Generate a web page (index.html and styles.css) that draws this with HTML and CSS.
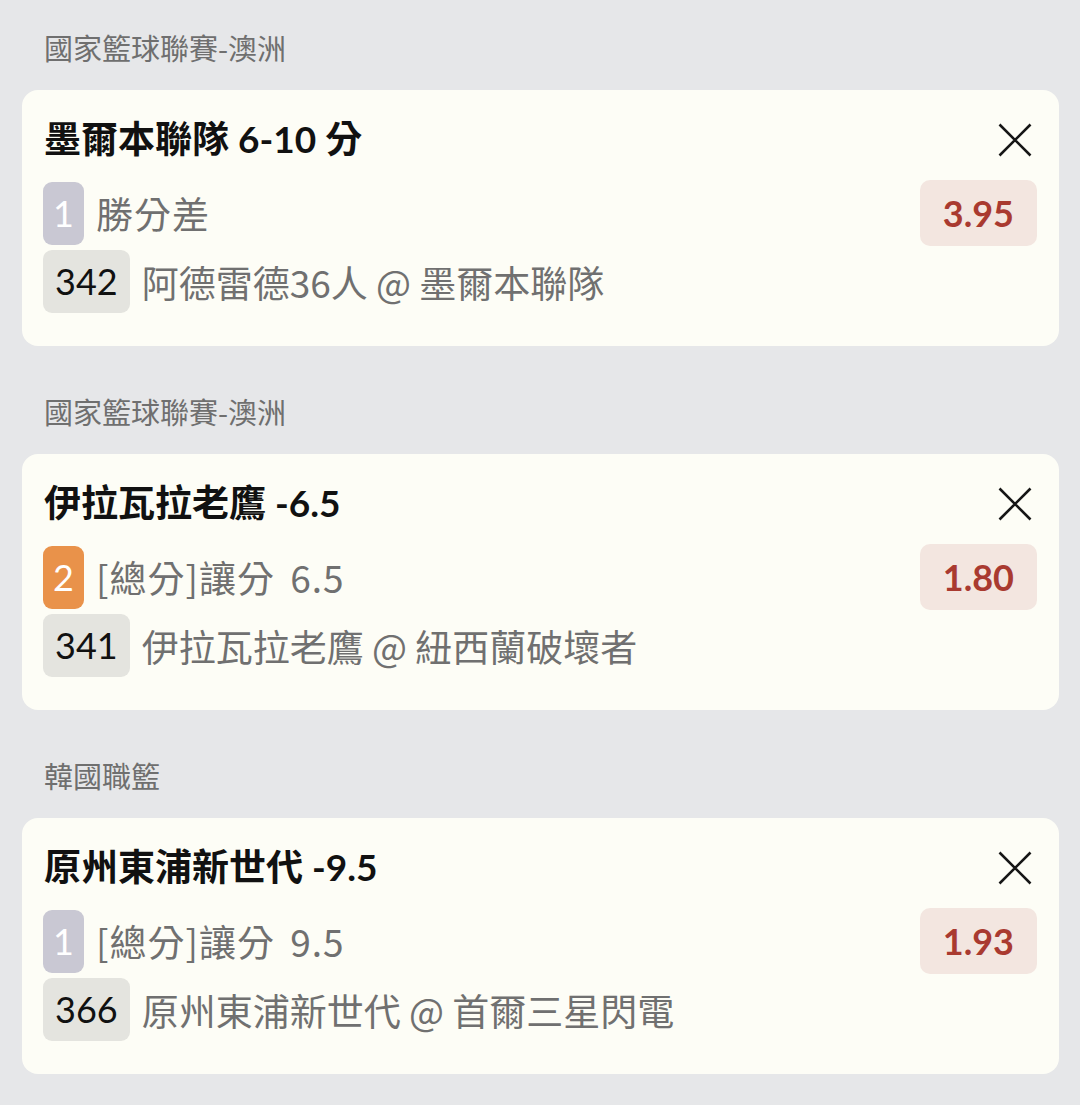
FILE: index.html
```html
<!DOCTYPE html>
<html lang="zh-Hant">
<head>
  <meta charset="UTF-8">
  <title>投注單</title>
  <link rel="stylesheet" href="styles.css">
</head>
<body>
  <div class="page">

    <div class="group">
      <div class="league">國家籃球聯賽-澳洲</div>
      <div class="card">
        <div class="card-head">
          <div class="pick">墨爾本聯隊 6-10 分</div>
          <svg class="close" width="34" height="34" viewBox="0 0 34 34">
            <path d="M1.5 1.5 L32.5 32.5 M32.5 1.5 L1.5 32.5" stroke="#161616" stroke-width="2.6" fill="none"/>
          </svg>
        </div>
        <div class="line">
          <span class="rank">1</span>
          <span class="market">勝分差</span>
          <span class="odds">3.95</span>
        </div>
        <div class="line line-match">
          <span class="code">342</span>
          <span class="match">阿德雷德36人 @ 墨爾本聯隊</span>
        </div>
      </div>
    </div>

    <div class="group">
      <div class="league">國家籃球聯賽-澳洲</div>
      <div class="card">
        <div class="card-head">
          <div class="pick">伊拉瓦拉老鷹 -6.5</div>
          <svg class="close" width="34" height="34" viewBox="0 0 34 34">
            <path d="M1.5 1.5 L32.5 32.5 M32.5 1.5 L1.5 32.5" stroke="#161616" stroke-width="2.6" fill="none"/>
          </svg>
        </div>
        <div class="line">
          <span class="rank rank-hot">2</span>
          <span class="market">[總分]讓分 6.5</span>
          <span class="odds">1.80</span>
        </div>
        <div class="line line-match">
          <span class="code">341</span>
          <span class="match">伊拉瓦拉老鷹 @ 紐西蘭破壞者</span>
        </div>
      </div>
    </div>

    <div class="group">
      <div class="league">韓國職籃</div>
      <div class="card">
        <div class="card-head">
          <div class="pick">原州東浦新世代 -9.5</div>
          <svg class="close" width="34" height="34" viewBox="0 0 34 34">
            <path d="M1.5 1.5 L32.5 32.5 M32.5 1.5 L1.5 32.5" stroke="#161616" stroke-width="2.6" fill="none"/>
          </svg>
        </div>
        <div class="line">
          <span class="rank">1</span>
          <span class="market">[總分]讓分 9.5</span>
          <span class="odds">1.93</span>
        </div>
        <div class="line line-match">
          <span class="code">366</span>
          <span class="match">原州東浦新世代 @ 首爾三星閃電</span>
        </div>
      </div>
    </div>

  </div>
</body>
</html>
```

FILE: styles.css
```css
body {
  margin: 0;
  background: #e6e7e9;
  font-family: Lato, "Noto Sans CJK TC", sans-serif;
  color: #111;
}

.page {
  padding: 27px 21px 0 22px;
}

.group + .group {
  margin-top: 45px;
}

.league {
  font-family: "Noto Sans CJK TC", sans-serif;
  font-size: 29px;
  line-height: 40px;
  color: #6f6f6f;
  padding-left: 22px;
  margin-bottom: 23px;
}

.card {
  background: #fdfdf6;
  border-radius: 16px;
  padding: 25px 22px 33px 22px;
}

.card-head {
  display: flex;
  align-items: center;
  justify-content: space-between;
  height: 50px;
  padding-right: 5px;
}

.pick {
  font-size: 37px;
  font-weight: bold;
  color: #111;
  padding-bottom: 6px;
}

.line {
  display: flex;
  align-items: center;
  margin-top: 15px;
  font-size: 36px;
}

.line-match {
  margin-top: 4px;
}

.rank,
.code {
  height: 63px;
  line-height: 63px;
  border-radius: 9px;
  margin-left: -1px;
}

.rank {
  background: #c9c8d3;
  color: #fff;
  padding: 0 10px;
}

.rank-hot {
  background: #e9924a;
}

.code {
  background: #e4e4df;
  color: #111;
  padding: 0 12px;
}

.market,
.match {
  font-family: "Noto Sans CJK TC", sans-serif;
  font-size: 37px;
  color: #707070;
  margin-left: 12px;
}

.market {
  letter-spacing: 1px;
  word-spacing: 6px;
}

.odds {
  margin-left: auto;
  background: #f3e6e0;
  color: #a93a30;
  font-weight: bold;
  height: 66px;
  line-height: 66px;
  padding: 0 23px;
  border-radius: 10px;
}
```
